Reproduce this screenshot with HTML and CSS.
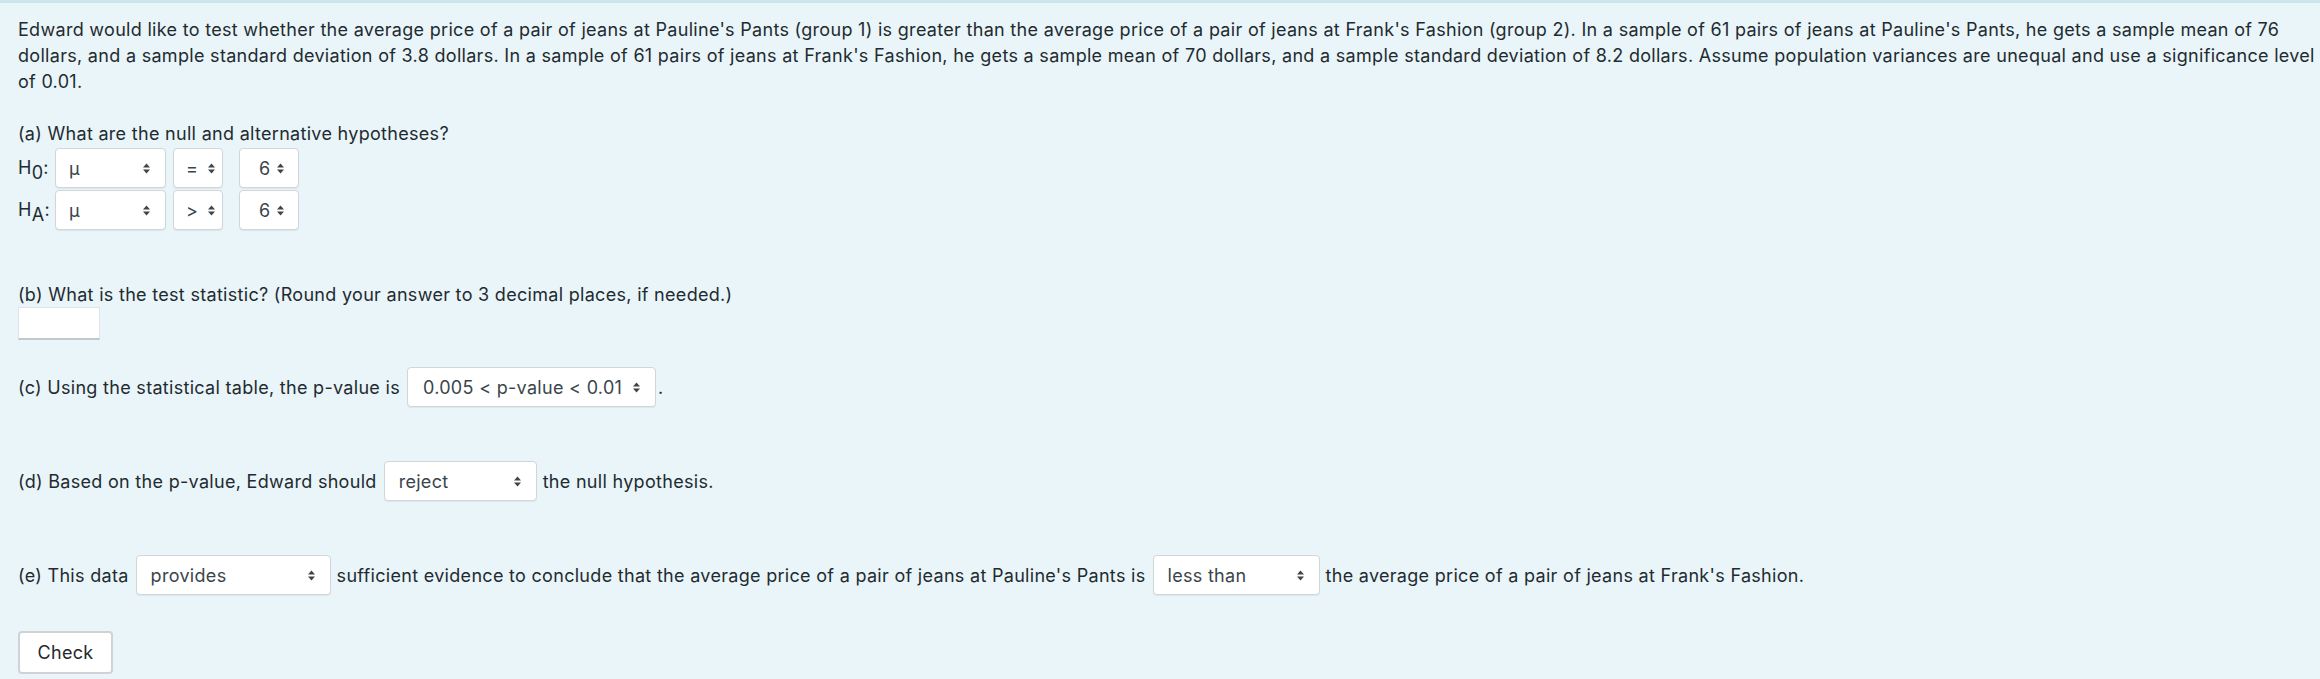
FILE: index.html
```html
<!DOCTYPE html>
<html>
<head>
<meta charset="utf-8">
<link rel="stylesheet" href="styles.css">
</head>
<body>
<div class="page">
  <p class="intro">Edward would like to test whether the average price of a pair of jeans at Pauline's Pants (group 1) is greater than the average price of a pair of jeans at Frank's Fashion (group 2). In a sample of 61 pairs of jeans at Pauline's Pants, he gets a sample mean of 76 dollars, and a sample standard deviation of 3.8 dollars. In a sample of 61 pairs of jeans at Frank's Fashion, he gets a sample mean of 70 dollars, and a sample standard deviation of 8.2 dollars. Assume population variances are unequal and use a significance level of 0.01.</p>

  <p class="q q-a">(a) What are the null and alternative hypotheses?</p>
  <div class="hyp">
    <span class="hlabel">H<sub>0</sub>:</span>
    <span class="sel w-mu"><span>μ</span><svg class="arr" width="7" height="11" viewBox="0 0 7 11"><polygon points="0,4.5 3.5,0.5 7,4.5"/><polygon points="0,6.5 3.5,10.5 7,6.5"/></svg></span>
    <span class="sel w-op"><span>=</span><svg class="arr" width="7" height="11" viewBox="0 0 7 11"><polygon points="0,4.5 3.5,0.5 7,4.5"/><polygon points="0,6.5 3.5,10.5 7,6.5"/></svg></span>
    <span class="sel w-num"><span>6</span><svg class="arr" width="7" height="11" viewBox="0 0 7 11"><polygon points="0,4.5 3.5,0.5 7,4.5"/><polygon points="0,6.5 3.5,10.5 7,6.5"/></svg></span>

    <span class="hlabel">H<sub>A</sub>:</span>
    <span class="sel w-mu"><span>μ</span><svg class="arr" width="7" height="11" viewBox="0 0 7 11"><polygon points="0,4.5 3.5,0.5 7,4.5"/><polygon points="0,6.5 3.5,10.5 7,6.5"/></svg></span>
    <span class="sel w-op"><span>&gt;</span><svg class="arr" width="7" height="11" viewBox="0 0 7 11"><polygon points="0,4.5 3.5,0.5 7,4.5"/><polygon points="0,6.5 3.5,10.5 7,6.5"/></svg></span>
    <span class="sel w-num"><span>6</span><svg class="arr" width="7" height="11" viewBox="0 0 7 11"><polygon points="0,4.5 3.5,0.5 7,4.5"/><polygon points="0,6.5 3.5,10.5 7,6.5"/></svg></span>
  </div>

  <p class="q q-b">(b) What is the test statistic? (Round your answer to 3 decimal places, if needed.)</p>
  <input class="answer" type="text">

  <div class="row row-c">
    <span>(c) Using the statistical table, the p-value is</span>
    <span class="sel w-p"><span>0.005 &lt; p-value &lt; 0.01</span><svg class="arr" width="7" height="11" viewBox="0 0 7 11"><polygon points="0,4.5 3.5,0.5 7,4.5"/><polygon points="0,6.5 3.5,10.5 7,6.5"/></svg></span>
    <span class="dot">.</span>
  </div>

  <div class="row row-d">
    <span>(d) Based on the p-value, Edward should</span>
    <span class="sel w-rej"><span>reject</span><svg class="arr" width="7" height="11" viewBox="0 0 7 11"><polygon points="0,4.5 3.5,0.5 7,4.5"/><polygon points="0,6.5 3.5,10.5 7,6.5"/></svg></span>
    <span>the null hypothesis.</span>
  </div>

  <div class="row row-e">
    <span>(e) This data</span>
    <span class="sel w-prov"><span>provides</span><svg class="arr" width="7" height="11" viewBox="0 0 7 11"><polygon points="0,4.5 3.5,0.5 7,4.5"/><polygon points="0,6.5 3.5,10.5 7,6.5"/></svg></span>
    <span>sufficient evidence to conclude that the average price of a pair of jeans at Pauline's Pants is</span>
    <span class="sel w-less"><span>less than</span><svg class="arr" width="7" height="11" viewBox="0 0 7 11"><polygon points="0,4.5 3.5,0.5 7,4.5"/><polygon points="0,6.5 3.5,10.5 7,6.5"/></svg></span>
    <span>the average price of a pair of jeans at Frank's Fashion.</span>
  </div>

  <button class="check" type="button">Check</button>
</div>
</body>
</html>
```

FILE: styles.css
```css
html, body {
  margin: 0;
  padding: 0;
}
body {
  background: #e9f5f8;
  border-top: 3px solid #cbe5ed;
  font-family: Inter, "Liberation Sans", sans-serif;
  font-size: 18px;
  letter-spacing: 0.3px;
  color: #1f2b31;
  height: 676px;
  overflow: hidden;
}
.page {
  padding: 14px 2px 0 18px;
}
.intro {
  margin: 0;
  line-height: 26px;
}
.q {
  margin: 0;
  line-height: 26px;
}
.q-a {
  margin-top: 26px;
}
.hyp {
  display: grid;
  grid-template-columns: 37px auto auto auto;
  justify-content: start;
  align-items: center;
  row-gap: 2px;
  margin-top: 1px;
}
.hlabel {
  font-size: 18px;
  line-height: 26px;
}
.hlabel sub {
  font-size: 18px;
  vertical-align: -5px;
  line-height: 0;
}
.sel {
  display: inline-flex;
  align-items: center;
  justify-content: space-between;
  box-sizing: border-box;
  height: 40px;
  padding: 0 15px 0 13px;
  background: #fff;
  border: 1px solid #d0d6d9;
  border-radius: 4px;
  box-shadow: 0 1px 1px rgba(0, 0, 0, 0.06);
  font-size: 18px;
  color: #3a454b;
  white-space: nowrap;
}
.arr {
  fill: #3f4448;
  flex: none;
}
.w-mu { width: 111px; }
.w-op { width: 50px; margin-left: 7px; padding: 0 7px 0 12px; }
.w-num { width: 60px; margin-left: 16px; padding: 0 14px 0 19px; }
.q-b {
  margin-top: 53px;
  line-height: 24px;
}
.answer {
  display: block;
  box-sizing: border-box;
  width: 82px;
  height: 33px;
  margin: 0;
  padding: 0;
  background: #fff;
  border: 1px solid #dfe4e6;
  border-bottom: 2px solid #c3c8cb;
  border-radius: 0;
  outline: none;
}
.row {
  display: flex;
  align-items: center;
  white-space: nowrap;
}
.row-c { margin-top: 27px; }
.row-d { margin-top: 54px; }
.row-e { margin-top: 54px; }
.row .sel {
  margin: 0 6px 0 7px;
}
.w-p { width: 249px; padding-left: 15px; }
.row-c .dot { margin-left: -4px; }
.w-rej { width: 153px; padding-left: 14px; }
.w-prov { width: 195px; padding-left: 14px; }
.w-less { width: 167px; padding-left: 14px; }
.check {
  display: block;
  box-sizing: border-box;
  width: 95px;
  height: 43px;
  margin-top: 36px;
  background: #fff;
  border: 2px solid #d0d3d5;
  border-radius: 4px;
  font-family: Inter, "Liberation Sans", sans-serif;
  font-size: 18px;
  letter-spacing: 0.3px;
  color: #22292d;
  padding: 0;
}
```
